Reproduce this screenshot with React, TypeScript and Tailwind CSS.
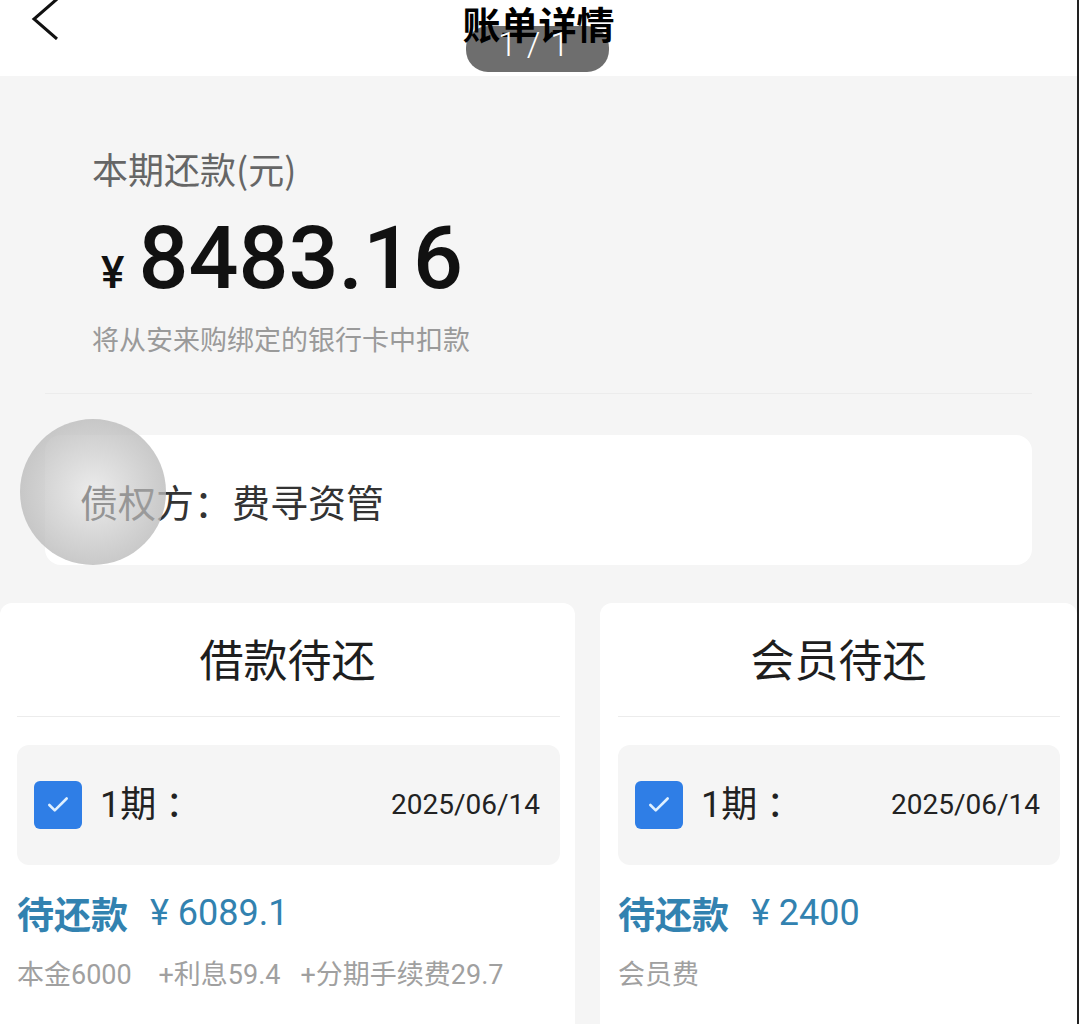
import React from "react";
import { Check } from "lucide-react";

const cjk = { fontFamily: '"Noto Sans CJK SC", "Noto Sans", sans-serif' };
const num = { fontFamily: 'Roboto, "Noto Sans CJK SC", sans-serif' };

function Period() {
  return (
    <div className="flex h-[120px] items-center justify-between rounded-xl bg-[#f5f5f5] pl-[17px] pr-[20px]">
      <div className="flex items-center">
        <div className="flex h-[48px] w-[48px] items-center justify-center rounded-[6px] bg-[#2f7ee6]">
          <Check size={26} strokeWidth={2.4} className="text-[#dff0ff]" />
        </div>
        <span className="ml-[18px] text-[36px] text-[#222]" style={num}>
          1期 ：
        </span>
      </div>
      <span className="text-[28px] text-[#222]" style={num}>
        2025/06/14
      </span>
    </div>
  );
}

function DueCard({
  title,
  amount,
  detail,
  width,
  pad,
}: {
  title: string;
  amount: string;
  detail: React.ReactNode;
  width: string;
  pad: string;
}) {
  return (
    <div className={`${width} h-[460px] shrink-0 rounded-xl bg-white`}>
      <div className="h-[113px] pt-[33px] text-center text-[44px] leading-[44px] text-[#1e1e1e]" style={cjk}>
        {title}
      </div>
      <div className={pad}>
        <div className="h-px bg-[#ececec]" />
        <div className="mt-[28px]">
          <Period />
        </div>
        <div className="mt-[26px] flex h-[44px] items-center gap-[22px] text-[#3282b0]">
          <span className="text-[37px] font-bold leading-[44px]" style={cjk}>
            待还款
          </span>
          <span className="text-[36px] leading-[44px]" style={num}>
            ¥ {amount}
          </span>
        </div>
        <div className="mt-[23px] text-[27px] leading-[34px] text-[#a0a0a0]" style={num}>
          {detail}
        </div>
      </div>
    </div>
  );
}

export default function App() {
  return (
    <div className="flex h-[1024px] w-[1080px] overflow-hidden bg-white" style={cjk}>
      <div className="relative w-[1077px] shrink-0 bg-[#f5f5f5]">
        <div className="relative h-[76px] bg-white">
          <svg className="absolute left-[30px] top-[-2px]" width="30" height="42" viewBox="0 0 30 42">
            <path d="M27 1 L4 21 L27 41" fill="none" stroke="#111" strokeWidth="3" />
          </svg>
          <div className="absolute left-[466px] top-[26px] h-[46px] w-[143px] rounded-[22px] bg-[#6e6e6e]" />
          <div className="absolute left-0 right-0 top-[2px] text-center text-[38px] font-bold leading-[42px] text-black">
            账单详情
          </div>
          <div
            className="absolute left-0 right-0 top-[24px] text-center text-[34px] font-light leading-[40px] tracking-[10px] text-white"
            style={num}
          >
            1/1
          </div>
        </div>

        <div className="px-[92px] pt-[70px]">
          <div className="text-[36px] leading-[44px] text-[#666]">本期还款(元)</div>
          <div className="mt-[20px] flex items-baseline" style={num}>
            <span className="ml-[9px] text-[44px] font-medium text-[#111]">¥</span>
            <span className="ml-[14px] text-[88px] font-medium leading-[96px] text-[#111]">8483.16</span>
          </div>
          <div className="mt-[16px] text-[27px] leading-[34px] text-[#9a9a9a]">将从安来购绑定的银行卡中扣款</div>
        </div>

        <div className="mx-[45px] mt-[37px] h-px bg-[#ececec]" />

        <div className="mx-[45px] mt-[41px] flex h-[130px] items-center rounded-2xl bg-white pl-[35px]">
          <span className="text-[38px] text-[#333]">债权方：费寻资管</span>
        </div>

        <div className="absolute left-[20px] top-[419px] h-[146px] w-[146px] rounded-full bg-[radial-gradient(circle,rgba(220,220,220,0.55)_0%,rgba(190,190,190,0.75)_60%,rgba(175,175,175,0.85)_100%)]" />

        <div className="mt-[38px] flex gap-[25px]">
          <DueCard
            title="借款待还"
            amount="6089.1"
            width="w-[575px]"
            pad="pl-[17px] pr-[15px]"
            detail={<span className="whitespace-pre">本金6000    +利息59.4   +分期手续费29.7</span>}
          />
          <DueCard
            title="会员待还"
            amount="2400"
            width="w-[477px]"
            pad="pl-[18px] pr-[17px]"
            detail="会员费"
          />
        </div>
      </div>
      <div className="w-[2px] shrink-0 bg-[#222]" />
      <div className="flex-1 bg-white" />
    </div>
  );
}
